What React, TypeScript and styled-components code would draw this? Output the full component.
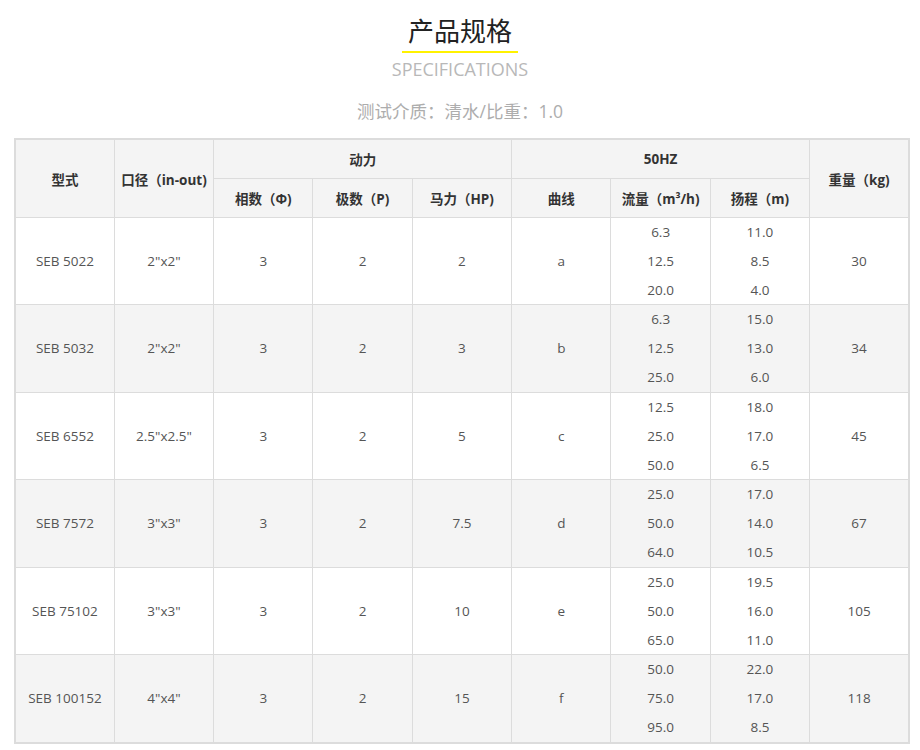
import React from "react";
import styled, { createGlobalStyle } from "styled-components";

const Global = createGlobalStyle`
  html, body { margin: 0; padding: 0; background: #fff; }
  body { font-family: "Open Sans", "Noto Sans CJK SC", sans-serif; }
`;

const Page = styled.div`
  width: 920px;
  padding-top: 12px;
  display: flex;
  flex-direction: column;
  align-items: center;
`;

const Title = styled.h1`
  margin: 0;
  padding: 0 6px 3px;
  font-family: "Noto Sans CJK SC", sans-serif;
  font-weight: 400;
  font-size: 26px;
  line-height: 36px;
  color: #222;
  border-bottom: 2px solid #fff200;
`;

const Subtitle = styled.div`
  margin-top: 2px;
  font-family: "Open Sans", sans-serif;
  font-size: 18px;
  line-height: 28px;
  color: #b8b8b8;
`;

const Note = styled.div`
  margin-top: 14px;
  font-family: "Open Sans", "Noto Sans CJK SC", sans-serif;
  font-size: 17.5px;
  line-height: 28px;
  color: #adadad;
`;

const Table = styled.table`
  align-self: flex-start;
  margin: 13px 0 0 14px;
  width: 896px;
  table-layout: fixed;
  border-collapse: collapse;
  border: 2px solid #dcdcdc;
  font-size: 13.5px;
  color: #555;
`;

const Th = styled.th`
  height: 38px;
  padding: 0;
  border: 1px solid #dcdcdc;
  background: #f4f4f4;
  color: #333;
  font-weight: 700;
  font-size: 13.5px;
  text-align: center;
  vertical-align: middle;
  white-space: nowrap;
  font-family: "Open Sans", "Noto Sans CJK SC", sans-serif;
`;

const Tr = styled.tr<{ $alt: boolean }>`
  background: ${(p) => (p.$alt ? "#f4f4f4" : "#fff")};
`;

const Td = styled.td`
  padding: 0;
  border: 1px solid #dcdcdc;
  text-align: center;
  vertical-align: middle;
  line-height: 28.83px;
`;

const Line = styled.div`
  line-height: 28.83px;
`;

type Row = {
  model: string;
  size: string;
  hp: string;
  curve: string;
  flow: string[];
  head: string[];
  weight: string;
};

const rows: Row[] = [
  { model: "SEB 5022", size: '2"x2"', hp: "2", curve: "a", flow: ["6.3", "12.5", "20.0"], head: ["11.0", "8.5", "4.0"], weight: "30" },
  { model: "SEB 5032", size: '2"x2"', hp: "3", curve: "b", flow: ["6.3", "12.5", "25.0"], head: ["15.0", "13.0", "6.0"], weight: "34" },
  { model: "SEB 6552", size: '2.5"x2.5"', hp: "5", curve: "c", flow: ["12.5", "25.0", "50.0"], head: ["18.0", "17.0", "6.5"], weight: "45" },
  { model: "SEB 7572", size: '3"x3"', hp: "7.5", curve: "d", flow: ["25.0", "50.0", "64.0"], head: ["17.0", "14.0", "10.5"], weight: "67" },
  { model: "SEB 75102", size: '3"x3"', hp: "10", curve: "e", flow: ["25.0", "50.0", "65.0"], head: ["19.5", "16.0", "11.0"], weight: "105" },
  { model: "SEB 100152", size: '4"x4"', hp: "15", curve: "f", flow: ["50.0", "75.0", "95.0"], head: ["22.0", "17.0", "8.5"], weight: "118" },
];

export default function App() {
  return (
    <>
      <Global />
      <Page>
        <Title>产品规格</Title>
        <Subtitle>SPECIFICATIONS</Subtitle>
        <Note>测试介质：清水/比重：1.0</Note>
        <Table>
          <colgroup>
            {Array.from({ length: 9 }).map((_, i) => (
              <col key={i} />
            ))}
          </colgroup>
          <thead>
            <tr>
              <Th rowSpan={2}>型式</Th>
              <Th rowSpan={2}>口径（in-out)</Th>
              <Th colSpan={3}>动力</Th>
              <Th colSpan={3}>50HZ</Th>
              <Th rowSpan={2}>重量（kg)</Th>
            </tr>
            <tr>
              <Th>相数（Φ)</Th>
              <Th>极数（P)</Th>
              <Th>马力（HP)</Th>
              <Th>曲线</Th>
              <Th>流量（m³/h)</Th>
              <Th>扬程（m)</Th>
            </tr>
          </thead>
          <tbody>
            {rows.map((r, i) => (
              <Tr key={r.model} $alt={i % 2 === 1}>
                <Td>{r.model}</Td>
                <Td>{r.size}</Td>
                <Td>3</Td>
                <Td>2</Td>
                <Td>{r.hp}</Td>
                <Td>{r.curve}</Td>
                <Td>
                  {r.flow.map((v, j) => (
                    <Line key={j}>{v}</Line>
                  ))}
                </Td>
                <Td>
                  {r.head.map((v, j) => (
                    <Line key={j}>{v}</Line>
                  ))}
                </Td>
                <Td>{r.weight}</Td>
              </Tr>
            ))}
          </tbody>
        </Table>
      </Page>
    </>
  );
}
